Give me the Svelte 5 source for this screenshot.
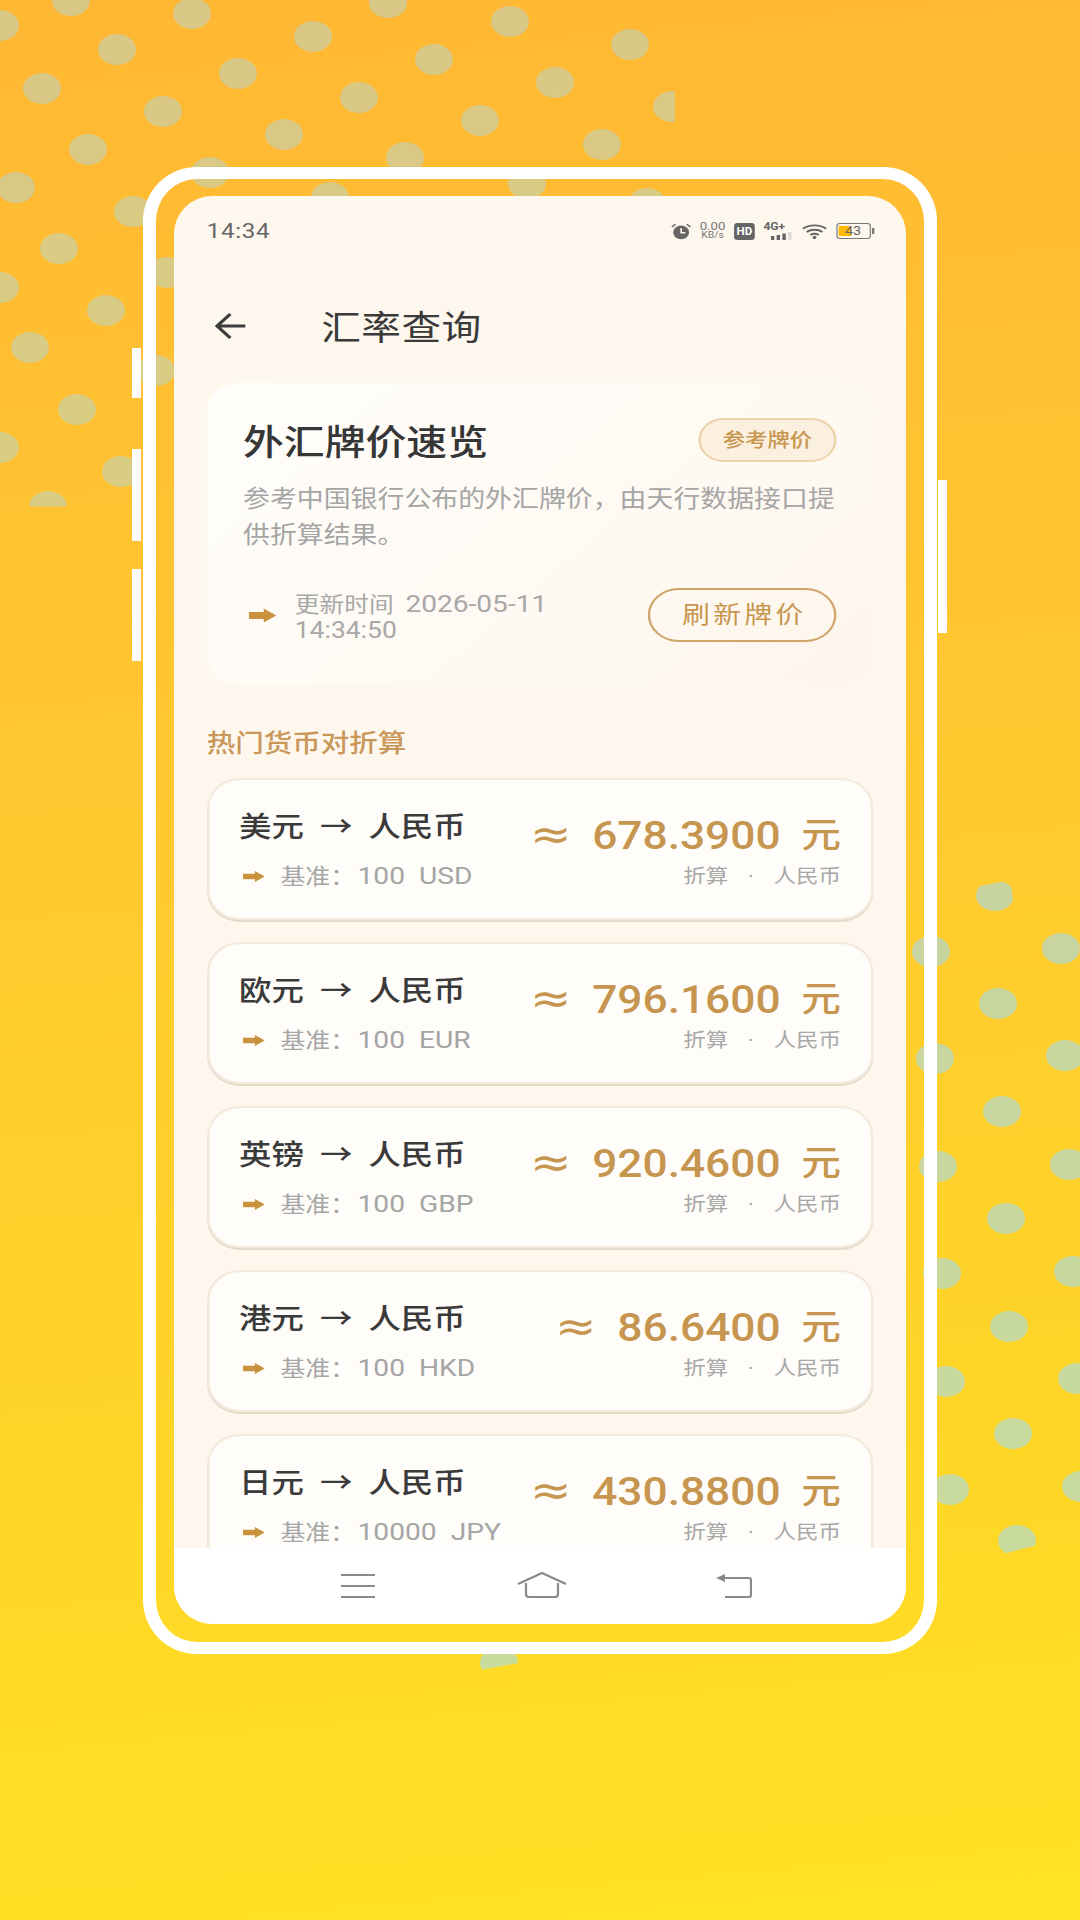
<script>
  const leftDots = [
    [0,25],[71,0],[192,13],[388,2],[117,49],[313,36],[510,21],[42,88],[238,73],[434,59],[630,44],[163,111],[359,97],[555,82],
    [88,149],[284,134],[480,120],[602,144],[16,187],[210,172],[405,157],[133,211],[330,197],[527,183],[647,203],[59,248],
    [167,272],[106,310],[30,347],[156,370],[0,287],[77,409],[0,447],[121,471]
  ];
  const rightDots = [
    [931,951],[1061,948],[998,1003],[935,1058],[1065,1055],[1002,1111],[938,1166],[1069,1164],[1006,1218],[942,1273],
    [1073,1271],[1009,1326],[946,1381],[1077,1378],[1013,1433],[950,1489],[1081,1486]
  ];
  const cutLeft = [
    { x: 672, y: 106, clip: 'polygon(0 0, 58% 0, 58% 100%, 0 100%)' },
    { x: 48, y: 506, clip: 'polygon(0 0, 100% 0, 100% 50%, 0 50%)' }
  ];
  const cutRight = [
    { x: 995, y: 895, clip: 'polygon(0 22%, 92% 0, 100% 100%, 0 100%)' },
    { x: 1017, y: 1540, clip: 'polygon(0 0, 100% 0, 100% 66%, 24% 90%, 0 90%)' },
    { x: 499, y: 1662, clip: 'polygon(0 0, 100% 0, 100% 52%, 0 74%)' }
  ];
  const rates = [
    { from: '美元', base: '100  USD', value: '678.3900' },
    { from: '欧元', base: '100  EUR', value: '796.1600' },
    { from: '英镑', base: '100  GBP', value: '920.4600' },
    { from: '港元', base: '100  HKD', value: '86.6400' },
    { from: '日元', base: '10000  JPY', value: '430.8800' }
  ];
</script>

<div class="stage">
  {#each leftDots as d}
    <span class="dot" style="left:{d[0] - 19}px;top:{d[1] - 15}px"></span>
  {/each}
  {#each cutLeft as d}
    <span class="dot" style="left:{d.x - 19}px;top:{d.y - 15}px;clip-path:{d.clip}"></span>
  {/each}
  {#each rightDots as d}
    <span class="dot cool" style="left:{d[0] - 19}px;top:{d[1] - 15}px"></span>
  {/each}
  {#each cutRight as d}
    <span class="dot cool" style="left:{d.x - 19}px;top:{d.y - 15}px;clip-path:{d.clip}"></span>
  {/each}

  <div class="phone">
    <span class="side s1"></span>
    <span class="side s2"></span>
    <span class="side s3"></span>
    <span class="side s4"></span>

    <div class="screen">
      <div class="view">
        <div class="status">
          <span class="time">14:34</span>
          <div class="status-icons">
            <svg class="alarm" viewBox="0 0 20 18" aria-hidden="true">
              <circle cx="10" cy="10" r="7.6" fill="#666"/>
              <path d="M10 5.5V10.5H14" fill="none" stroke="#fdf7ee" stroke-width="1.7"/>
              <path d="M1 4 4.5 1M19 4 15.5 1" fill="none" stroke="#666" stroke-width="1.6"/>
            </svg>
            <div class="speed"><span>0.00</span><span class="unit">KB/s</span></div>
            <span class="hd">HD</span>
            <div class="net">
              <span>4G+</span>
              <svg viewBox="0 0 20 8" aria-hidden="true">
                <rect x="0" y="4" width="3" height="4" fill="#666"/>
                <rect x="5" y="3" width="3" height="5" fill="#666"/>
                <rect x="10" y="1.5" width="3" height="6.5" fill="#666"/>
                <rect x="15" y="0" width="3" height="8" fill="#ddd"/>
              </svg>
            </div>
            <svg class="wifi" viewBox="0 0 24 17" aria-hidden="true">
              <path d="M1 5.5C7 .5 17 .5 23 5.5M4.5 9C8.5 5.8 15.5 5.8 19.5 9M8 12.3C10.3 10.8 13.7 10.8 16 12.3" fill="none" stroke="#666" stroke-width="2"/>
              <circle cx="12" cy="15" r="1.8" fill="#666"/>
            </svg>
            <div class="battery"><span class="fill"></span><span class="level">43</span><span class="tip"></span></div>
          </div>
        </div>

        <header class="top">
          <svg class="back" viewBox="0 0 28 28" aria-hidden="true">
            <path d="M27 14H3M14 2 2.5 14 14 26" fill="none" stroke="#3d3d3d" stroke-width="3"/>
          </svg>
          <h1>汇率查询</h1>
        </header>

        <section class="hero">
          <div class="hero-head">
            <h2>外汇牌价速览</h2>
            <span class="tag">参考牌价</span>
          </div>
          <p class="desc">参考中国银行公布的外汇牌价，由天行数据接口提<br />供折算结果。</p>
          <div class="meta">
            <svg class="arrow big" viewBox="0 0 24 14" aria-hidden="true"><path d="M0 3.5H13V0L24 7 13 14V10.5H0Z"/></svg>
            <span class="when">更新时间 <span class="date">2026-05-11</span><br /><span class="clock">14:34:50</span></span>
            <span class="refresh">刷新牌价</span>
          </div>
        </section>

        <div class="label">热门货币对折算</div>

        <div class="list">
          {#each rates as r}
            <article class="rate">
              <div class="col left">
                <div class="pair">{r.from}  →  人民币</div>
                <div class="base">
                  <svg class="arrow" viewBox="0 0 24 14" aria-hidden="true"><path d="M0 3.5H13V0L24 7 13 14V10.5H0Z"/></svg>
                  <span>基准：<span class="num">{r.base}</span></span>
                </div>
              </div>
              <div class="col right">
                <div class="value"><span class="approx">≈</span> {r.value}<span class="yuan">元</span></div>
                <div class="note">折算    ·    人民币</div>
              </div>
            </article>
          {/each}
        </div>
      </div>

      <nav class="nav">
        <svg class="n-menu" viewBox="0 0 34 24" aria-hidden="true">
          <path d="M0 1H34M0 12H34M0 23H34" stroke="#8a8a8a" stroke-width="2.2" fill="none"/>
        </svg>
        <svg class="n-home" viewBox="0 0 50 26" aria-hidden="true">
          <path d="M1 12 25 1 49 12" stroke="#8a8a8a" stroke-width="2.2" fill="none"/>
          <path d="M9 11V22Q9 25 12 25H38Q41 25 41 22V11" stroke="#8a8a8a" stroke-width="2.2" fill="none"/>
        </svg>
        <svg class="n-back" viewBox="0 0 36 24" aria-hidden="true">
          <path d="M6 4H33Q35 4 35 6V21Q35 23 33 23H9" stroke="#8a8a8a" stroke-width="2.2" fill="none"/>
          <path d="M0 4 9 0V8Z" fill="#8a8a8a"/>
        </svg>
      </nav>
    </div>
  </div>
</div>

<style>
  :global(body) {
    margin: 0;
  }
  .stage {
    position: relative;
    width: 1080px;
    height: 1920px;
    box-sizing: border-box;
    padding: 167px 143px 0;
    overflow: hidden;
    background: linear-gradient(175deg, #ffb733 0%, #ffc830 40%, #ffd627 75%, #ffe224 100%);
    font-family: Roboto, "Noto Sans CJK SC", sans-serif;
  }
  .dot {
    position: absolute;
    width: 38px;
    height: 31px;
    border-radius: 50%;
    background: rgba(171, 220, 233, 0.45);
  }
  .dot.cool {
    background: rgba(155, 220, 255, 0.55);
  }
  .phone {
    position: relative;
    box-sizing: border-box;
    width: 794px;
    height: 1487px;
    padding: 17px 18px;
    border: 12px solid #fff;
    border-left-width: 13px;
    border-right-width: 13px;
    border-radius: 54px;
  }
  .side {
    position: absolute;
    width: 9px;
    background: #fff;
  }
  .s1 { left: -24px; top: 169px; height: 50px; }
  .s2 { left: -24px; top: 270px; height: 92px; }
  .s3 { left: -24px; top: 390px; height: 92px; }
  .s4 { right: -23px; top: 301px; height: 153px; }

  .screen {
    display: flex;
    flex-direction: column;
    width: 732px;
    height: 1428px;
    overflow: hidden;
    border-radius: 38px;
    background: #fdf7ee;
  }
  .view {
    width: 636.5px;
    height: 1352px;
    flex: none;
    overflow: hidden;
    transform: scaleX(1.15);
    transform-origin: 0 0;
    color: #333;
  }

  .status {
    display: flex;
    align-items: center;
    justify-content: space-between;
    height: 70px;
    padding: 0 28.5px;
    color: #666;
  }
  .time {
    font-size: 21px;
    letter-spacing: 0.6px;
  }
  .status-icons {
    display: flex;
    align-items: center;
    gap: 7.5px;
  }
  .alarm { width: 18px; height: 17px; }
  .speed {
    display: flex;
    flex-direction: column;
    align-items: center;
    font-size: 11.5px;
    line-height: 9px;
    color: #777;
  }
  .unit { font-size: 9px; }
  .hd {
    width: 18px;
    height: 17px;
    border-radius: 3px;
    background: #666;
    color: #fff;
    font-size: 10px;
    font-weight: 700;
    line-height: 17px;
    text-align: center;
  }
  .net {
    display: flex;
    flex-direction: column;
    align-items: flex-start;
    font-size: 10.5px;
    font-weight: 700;
    line-height: 10px;
  }
  .net svg {
    display: block;
    width: 20px;
    height: 8px;
    margin-left: 6px;
  }
  .wifi { width: 22px; height: 17px; }
  .battery {
    position: relative;
    box-sizing: border-box;
    width: 30px;
    height: 16px;
    border: 1.5px solid #777;
    border-radius: 3px;
    margin-right: 2.5px;
  }
  .fill {
    position: absolute;
    left: 1.5px;
    top: 1.5px;
    width: 11px;
    height: 10px;
    background: #ffbb00;
  }
  .level {
    position: absolute;
    left: 0;
    right: 0;
    top: -1px;
    font-size: 12.5px;
    line-height: 15px;
    text-align: center;
    color: #666;
  }
  .tip {
    position: absolute;
    right: -4px;
    top: 3.5px;
    width: 2px;
    height: 6px;
    background: #777;
  }

  .top {
    display: flex;
    align-items: center;
    height: 88px;
    margin: 16px 0 13px;
    padding-left: 35px;
  }
  .back {
    width: 28px;
    height: 28px;
  }
  h1 {
    margin: 0 0 0 65px;
    padding-top: 4px;
    font-size: 34.5px;
    font-weight: 400;
    letter-spacing: 0.4px;
    line-height: 44px;
    color: #3a3a3a;
  }

  .hero {
    box-sizing: border-box;
    width: 579px;
    height: 302px;
    margin-left: 29px;
    padding: 31px 32px 0 31px;
    border-radius: 28px;
    background: linear-gradient(135deg, #fffefb 0%, #fef9f2 60%, #fdf6ec 100%);
  }
  .hero-head {
    display: flex;
    align-items: center;
    justify-content: space-between;
    height: 54px;
  }
  h2 {
    margin: 0;
    padding-top: 4px;
    font-size: 35.5px;
    font-weight: 500;
    line-height: 54px;
    color: #363636;
  }
  .tag {
    box-sizing: border-box;
    width: 120px;
    height: 44px;
    margin-top: -2px;
    border: 2px solid #ecd2ab;
    border-radius: 22px;
    background: #fbf0e0;
    color: #c8964e;
    font-size: 19.4px;
    font-weight: 500;
    line-height: 42px;
    text-align: center;
  }
  .desc {
    margin: 13px 0 0;
    font-size: 23.4px;
    line-height: 36px;
    color: #a5a5a5;
    white-space: nowrap;
  }
  .meta {
    display: flex;
    align-items: center;
    height: 54px;
    margin-top: 35px;
  }
  .arrow {
    display: block;
    fill: #c8923f;
    width: 19px;
    height: 13px;
    flex: none;
  }
  .arrow.big {
    width: 24px;
    height: 15px;
    margin-left: 5px;
  }
  .when {
    margin-left: 16px;
    padding-top: 4px;
    font-size: 21.5px;
    line-height: 26px;
    color: #a8a8a8;
    white-space: pre;
  }
  .date {
    margin-left: 5px;
    font-size: 24.4px;
  }
  .clock { font-size: 23px; }
  .refresh {
    box-sizing: border-box;
    width: 164px;
    height: 54px;
    margin-left: auto;
    padding-left: 4px;
    border: 2px solid #cfa469;
    border-radius: 27px;
    color: #c8964e;
    font-size: 24px;
    letter-spacing: 3px;
    line-height: 50px;
    text-align: center;
  }

  .label {
    margin: 42px 0 17px 28.5px;
    font-size: 24.8px;
    font-weight: 500;
    line-height: 34px;
    color: #c9975a;
  }
  .list {
    display: flex;
    flex-direction: column;
    gap: 22px;
    padding: 0 28.5px;
  }
  .rate {
    display: flex;
    justify-content: space-between;
    box-sizing: border-box;
    width: 579.5px;
    height: 142px;
    flex: none;
    padding: 0 26px 0 26px;
    border: 2px solid #f3eadc;
    border-radius: 29px;
    background: #fffdf9;
    box-shadow: 0 2px 0 #e6dccb;
  }
  .col {
    display: flex;
    flex-direction: column;
  }
  .pair {
    margin-top: 29px;
    font-size: 28.2px;
    font-weight: 500;
    line-height: 38px;
    color: #3a3a3a;
    white-space: pre;
  }
  .base {
    display: flex;
    align-items: center;
    gap: 14px;
    margin-top: 13px;
    padding-left: 2px;
    font-size: 21.7px;
    line-height: 32px;
    color: #a5a5a5;
    white-space: pre;
  }
  .base .arrow { margin-left: 1px; }
  .num {
    margin-left: 2px;
    font-size: 24.5px;
  }
  .right {
    align-items: flex-end;
  }
  .value {
    margin-top: 30.5px;
    font-size: 38.5px;
    font-weight: 500;
    line-height: 46px;
    color: #c6954f;
    white-space: pre;
  }
  .approx {
    margin-right: 8.5px;
    font-family: "DejaVu Sans", sans-serif;
    font-size: 43px;
    font-weight: 400;
  }
  .yuan {
    margin-left: 18px;
    font-size: 34.5px;
    vertical-align: 2px;
  }
  .note {
    margin-top: 4.5px;
    font-size: 19.6px;
    line-height: 28px;
    color: #a8a8a8;
    white-space: pre;
    word-spacing: -0.6px;
  }

  .nav {
    position: relative;
    display: flex;
    align-items: flex-start;
    height: 76px;
    flex: none;
    padding-top: 26px;
    box-sizing: border-box;
    background: #fff;
  }
  .n-menu {
    width: 34px;
    height: 24px;
    margin-left: 167px;
  }
  .n-home {
    width: 50px;
    height: 26px;
    margin-left: 142px;
    margin-top: -2px;
  }
  .n-back {
    width: 36px;
    height: 24px;
    margin-left: 149px;
  }
</style>
